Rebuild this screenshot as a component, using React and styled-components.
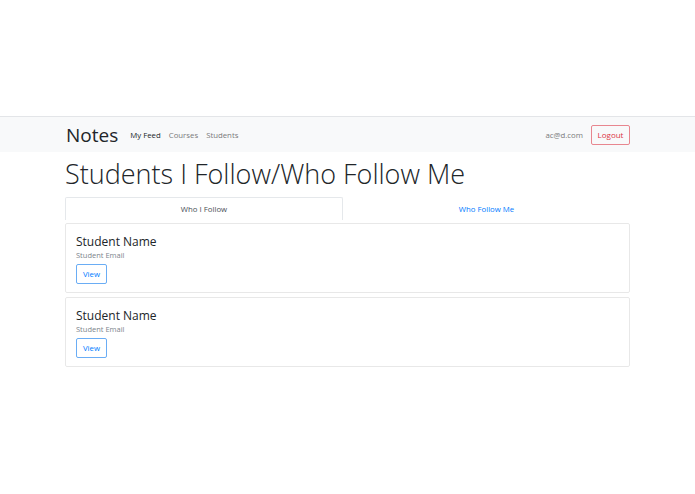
import React, { useState } from 'react';
import styled, { createGlobalStyle } from 'styled-components';

const GlobalStyle = createGlobalStyle`
  body {
    margin: 0;
    background: #fff;
    font-family: 'Open Sans', 'Noto Sans', 'Liberation Sans', sans-serif;
    color: #212529;
  }
`;

const students = [
  { id: 1, name: 'Student Name', email: 'Student Email' },
  { id: 2, name: 'Student Name', email: 'Student Email' },
];

const App = () => {
  const [tab, setTab] = useState('following');

  return (
    <>
      <GlobalStyle />
      <Page>
        <Navbar>
          <Container>
            <NavLeft>
              <Brand>Notes</Brand>
              <NavLink active>My Feed</NavLink>
              <NavLink>Courses</NavLink>
              <NavLink>Students</NavLink>
            </NavLeft>
            <NavRight>
              <UserEmail>ac@d.com</UserEmail>
              <LogoutButton>Logout</LogoutButton>
            </NavRight>
          </Container>
        </Navbar>
        <Main>
          <Title>Students I Follow/Who Follow Me</Title>
          <Tabs>
            <Tab active={tab === 'following'} onClick={() => setTab('following')}>
              Who I Follow
            </Tab>
            <Tab active={tab === 'followers'} onClick={() => setTab('followers')}>
              Who Follow Me
            </Tab>
          </Tabs>
          <CardList>
            {students.map((s) => (
              <Card key={s.id}>
                <CardTitle>{s.name}</CardTitle>
                <CardSubtitle>{s.email}</CardSubtitle>
                <ViewButton>View</ViewButton>
              </Card>
            ))}
          </CardList>
        </Main>
      </Page>
    </>
  );
};

export default App;

const Page = styled.div`
  padding-top: 116px;
`;

const Navbar = styled.nav`
  background: #f8f9fa;
  border-top: 1px solid #e3e5e8;
  height: 35px;
  display: flex;
  align-items: center;
`;

const Container = styled.div`
  width: 565px;
  margin: 0 auto;
  display: flex;
  align-items: center;
  justify-content: space-between;
`;

const NavLeft = styled.div`
  display: flex;
  align-items: center;
`;

const Brand = styled.span`
  font-size: 19px;
  color: #212529;
  margin-left: 1px;
  margin-right: 12px;
`;

const NavLink = styled.a`
  font-size: 7.8px;
  color: ${({ active }) => (active ? '#212529' : '#7a7a7a')};
  margin-right: 8px;
  cursor: pointer;
`;

const NavRight = styled.div`
  display: flex;
  align-items: center;
`;

const UserEmail = styled.span`
  font-size: 7.8px;
  color: #7a7a7a;
  margin-right: 8px;
`;

const LogoutButton = styled.button`
  font-family: inherit;
  font-size: 8px;
  color: #dc3545;
  background: transparent;
  border: 1px solid #e8868f;
  border-radius: 2px;
  height: 20px;
  width: 39px;
  padding: 0;
`;

const Main = styled.main`
  width: 565px;
  margin: 0 auto;
`;

const Title = styled.h1`
  font-size: 27px;
  font-weight: 300;
  line-height: 32px;
  margin: 6px 0 7px;
  color: #212529;
`;

const Tabs = styled.div`
  display: grid;
  grid-template-columns: 278px 1fr;
  border-bottom: 1px solid #e5e8eb;
`;

const Tab = styled.div`
  height: 21px;
  display: flex;
  align-items: center;
  justify-content: center;
  font-size: 7.8px;
  cursor: pointer;
  color: ${({ active }) => (active ? '#495057' : '#007bff')};
  border: 1px solid ${({ active }) => (active ? '#e5e8eb' : 'transparent')};
  border-bottom: none;
  border-radius: 2px 2px 0 0;
  background: #fff;
  margin-bottom: -1px;
  padding-bottom: 1px;
`;

const CardList = styled.div`
  display: flex;
  flex-direction: column;
  gap: 4px;
  margin-top: 3px;
`;

const Card = styled.div`
  border: 1px solid rgba(0, 0, 0, 0.09);
  border-radius: 2px;
  padding: 10px 10px 9px;
  height: 70px;
  box-sizing: border-box;
`;

const CardTitle = styled.div`
  font-size: 12px;
  line-height: 16px;
  color: #212529;
`;

const CardSubtitle = styled.div`
  font-size: 7.5px;
  line-height: 10px;
  color: #7d858c;
  margin-bottom: 0;
`;

const ViewButton = styled.button`
  font-family: inherit;
  font-size: 7.8px;
  color: #007bff;
  background: transparent;
  border: 1px solid #6aadf5;
  border-radius: 2px;
  height: 20px;
  width: 31px;
  padding: 0;
`;
